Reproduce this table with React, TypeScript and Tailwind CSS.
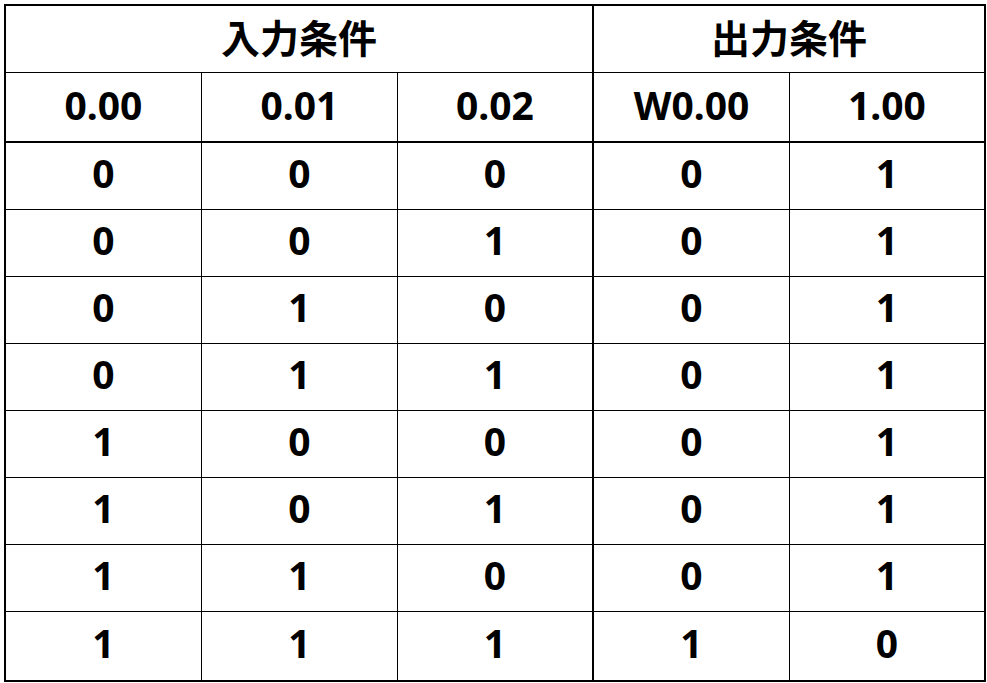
import React from "react";

const rows = [
  [0, 0, 0, 0, 1],
  [0, 0, 1, 0, 1],
  [0, 1, 0, 0, 1],
  [0, 1, 1, 0, 1],
  [1, 0, 0, 0, 1],
  [1, 0, 1, 0, 1],
  [1, 1, 0, 0, 1],
  [1, 1, 1, 1, 0],
];

const heads = ["0.00", "0.01", "0.02", "W0.00", "1.00"];

// right border per column: 1px, 1px, 2px (group split), 1px, none
const colBorder = ["border-r", "border-r", "border-r-2", "border-r", ""];
const colWidth = ["w-[196px]", "w-[196px]", "w-[196px]", "w-[196px]", "w-[194px]"];

const App = () => {
  return (
    <div className="bg-white w-[987px] h-[683px] pt-[4px] pl-[4px] font-['Noto_Sans','Noto_Sans_CJK_JP',sans-serif] font-bold text-black">
      <div className="w-[982px] border-2 border-black flex flex-col">
        {/* group header */}
        <div className="flex h-[67px] border-b border-black">
          <div className="w-[588px] border-r-2 border-black flex items-center justify-center pb-[6px] text-[39px] font-['Noto_Sans_CJK_JP',sans-serif]">
            入力条件
          </div>
          <div className="w-[390px] flex items-center justify-center pb-[6px] text-[39px] font-['Noto_Sans_CJK_JP',sans-serif]">
            出力条件
          </div>
        </div>

        {/* address header */}
        <div className="flex h-[70px] border-b-2 border-black">
          {heads.map((h, i) => (
            <div
              key={h}
              className={`${colWidth[i]} ${colBorder[i]} border-black flex items-center justify-center pb-[4px] text-[39px]`}
            >
              {h}
            </div>
          ))}
        </div>

        {/* truth table rows */}
        {rows.map((r, ri) => (
          <div
            key={ri}
            className={`flex ${ri === rows.length - 1 ? "h-[68px]" : "h-[67px] border-b border-black"}`}
          >
            {r.map((v, i) => (
              <div
                key={i}
                className={`${colWidth[i]} ${colBorder[i]} border-black flex items-center justify-center pb-[5px] text-[39px]`}
              >
                {v}
              </div>
            ))}
          </div>
        ))}
      </div>
    </div>
  );
};

export default App;
